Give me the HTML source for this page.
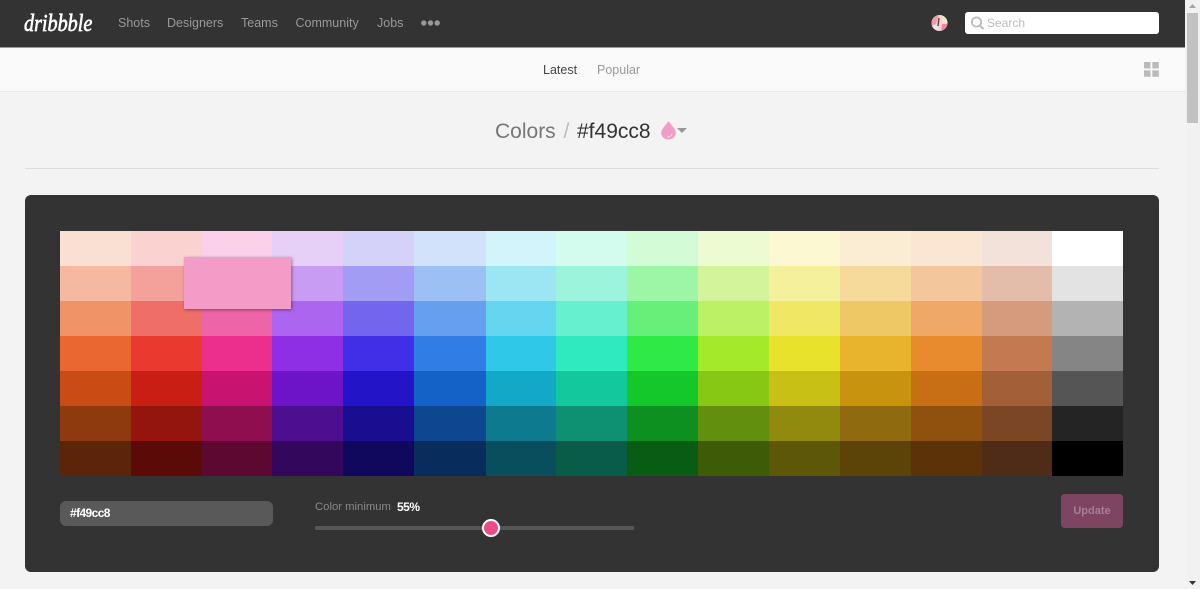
<!DOCTYPE html>
<html lang="en">
<head>
<meta charset="utf-8">
<title>Colors / #f49cc8</title>
<style>
html,body{margin:0;padding:0;width:1200px;height:589px;overflow:hidden;background:#f3f3f3;font-family:"Liberation Sans",Arial,sans-serif;}
.a{position:absolute;white-space:nowrap;}
#hdr{left:0;top:0;width:1185px;height:47px;background:#333;border-bottom:1px solid #999;}
#sub{left:0;top:48px;width:1185px;height:43px;background:#fafafa;border-bottom:1px solid #e8e8e8;}
.nav{top:15px;font-size:12.5px;line-height:16px;color:#999;}
#panel{left:25px;top:195px;width:1134px;height:377px;background:#333;border-radius:6px;}
#g{left:60px;top:231px;display:grid;grid-template-columns:71px 71px 70px 71px 71px 72px 70px 71px 71px 71px 71px 71px 71px 70px 71px;grid-auto-rows:35px;}
</style>
</head>
<body>
<div class="a" id="hdr"></div>
<div class="a" id="sub"></div>
<div class="a" style="left:24px;top:7px;font:italic 24px/34px 'Liberation Serif',serif;color:#fff;-webkit-text-stroke:.7px #fff;transform:scaleX(.84);transform-origin:0 0;">dribbble</div>
<div class="a nav" style="left:118px;">Shots</div>
<div class="a nav" style="left:167px;">Designers</div>
<div class="a nav" style="left:241px;">Teams</div>
<div class="a nav" style="left:295.500px;">Community</div>
<div class="a nav" style="left:377px;">Jobs</div>
<svg class="a" style="left:420px;top:18px;" width="22" height="10"><circle cx="3.800" cy="5" r="2.700" fill="#999"/><circle cx="10.500" cy="5" r="2.700" fill="#999"/><circle cx="17.200" cy="5" r="2.700" fill="#999"/></svg>

<svg class="a" style="left:931px;top:15px;" width="17" height="17" viewBox="0 0 17 17">
<defs><clipPath id="av"><circle cx="8.500" cy="8" r="8"/></clipPath></defs>
<g clip-path="url(#av)"><rect width="17" height="17" fill="#f2d3da"/><path d="M0 0h8L5 9 0 11z" fill="#e8a0a8"/><path d="M10 0h7v8h-5z" fill="#f3e6c8"/><path d="M0 11l6-1 1 7H0z" fill="#f6e3e8"/><path d="M11 9h6v8h-7z" fill="#e98aa3"/><path d="M8 3L7 11" stroke="#6b3a45" stroke-width="1.400"/></g></svg>
<div class="a" style="left:965px;top:12px;width:194px;height:22px;background:#fff;border-radius:3px;"></div>
<svg class="a" style="left:970px;top:15px;" width="15" height="16" viewBox="0 0 15 16"><circle cx="6.500" cy="7" r="4.600" fill="none" stroke="#bbb" stroke-width="1.800"/><path d="M10 10.500l3.400 3.600" stroke="#bbb" stroke-width="2.200"/></svg>
<div class="a" style="left:987px;top:15px;font-size:12px;line-height:16px;color:#bbb;">Search</div>

<div class="a" style="left:543px;top:62px;font-size:12.500px;line-height:16px;color:#444;">Latest</div>
<div class="a" style="left:597px;top:62px;font-size:12.500px;line-height:16px;color:#999;">Popular</div>
<svg class="a" style="left:1144px;top:62px;" width="15" height="15"><rect width="6.500" height="6.500" fill="#bbb"/><rect x="8.300" width="6.500" height="6.500" fill="#bbb"/><rect y="8.300" width="6.500" height="6.500" fill="#bbb"/><rect x="8.300" y="8.300" width="6.500" height="6.500" fill="#bbb"/></svg>

<div class="a" style="left:495px;top:119px;font-size:21px;line-height:26px;color:#777;">Colors</div>
<div class="a" style="left:563.500px;top:119px;font-size:21px;line-height:26px;color:#bbb;">/</div>
<div class="a" style="left:577px;top:119px;font-size:21px;line-height:26px;color:#333;">#f49cc8</div>
<svg class="a" style="left:660px;top:120px;" width="30" height="21" viewBox="0 0 30 21"><path d="M8.500 1C6.500 4.500 1.200 8.600 1.200 13c0 3.600 3.200 6.500 7.300 6.500s7.300-2.900 7.300-6.500C15.800 8.600 10.500 4.500 8.500 1z" fill="#f09cc8"/><path d="M7 17c2.500 0 4.500-1.200 5-3.500" fill="none" stroke="#fbdcec" stroke-width="1"/><path d="M17 8h10l-5 5z" fill="#999"/></svg>
<div class="a" style="left:25px;top:168px;width:1134px;height:1px;background:#dcdcdc;"></div>

<div class="a" id="panel"></div>
<div class="a" id="g">
<div style="background:#fadfd3"></div><div style="background:#fad2cf"></div><div style="background:#fad1e9"></div><div style="background:#e6d0f8"></div><div style="background:#d5d2fa"></div><div style="background:#d2e2fa"></div><div style="background:#d2f4fa"></div><div style="background:#d3fcef"></div><div style="background:#d2fbd6"></div><div style="background:#ecfbd2"></div><div style="background:#fcf9d2"></div><div style="background:#faedd3"></div><div style="background:#fbe5d3"></div><div style="background:#f3e2da"></div><div style="background:#ffffff"></div>
<div style="background:#f5b8a0"></div><div style="background:#f4a09b"></div><div style="background:#f49cc8"></div><div style="background:#c99cf3"></div><div style="background:#a39cf4"></div><div style="background:#9cbff4"></div><div style="background:#9ce6f4"></div><div style="background:#9cf4dc"></div><div style="background:#9cf6a6"></div><div style="background:#d4f49c"></div><div style="background:#f5f09c"></div><div style="background:#f5da9c"></div><div style="background:#f4c69c"></div><div style="background:#e3bda9"></div><div style="background:#e3e3e3"></div>
<div style="background:#f09468"></div><div style="background:#f06e68"></div><div style="background:#ee64a8"></div><div style="background:#ac65ee"></div><div style="background:#7265ee"></div><div style="background:#659fee"></div><div style="background:#65d6f0"></div><div style="background:#66f0cf"></div><div style="background:#66f079"></div><div style="background:#bcf065"></div><div style="background:#f0e865"></div><div style="background:#eec865"></div><div style="background:#f0a868"></div><div style="background:#d49c7c"></div><div style="background:#b3b3b3"></div>
<div style="background:#ea6830"></div><div style="background:#ea3a30"></div><div style="background:#ec2f8c"></div><div style="background:#8e2fe6"></div><div style="background:#402fe6"></div><div style="background:#307de6"></div><div style="background:#2fc8e8"></div><div style="background:#2feabe"></div><div style="background:#2fea46"></div><div style="background:#a4ea2a"></div><div style="background:#e8e22c"></div><div style="background:#e8b42c"></div><div style="background:#e88a2e"></div><div style="background:#c47a50"></div><div style="background:#858585"></div>
<div style="background:#c84c14"></div><div style="background:#c81e14"></div><div style="background:#c81470"></div><div style="background:#6e14c8"></div><div style="background:#2414c8"></div><div style="background:#1462c8"></div><div style="background:#14a8c8"></div><div style="background:#14c89e"></div><div style="background:#14c82c"></div><div style="background:#86c814"></div><div style="background:#c8c014"></div><div style="background:#c8940f"></div><div style="background:#c86e14"></div><div style="background:#a35f36"></div><div style="background:#555555"></div>
<div style="background:#8f3a0e"></div><div style="background:#94140e"></div><div style="background:#8f0e50"></div><div style="background:#4e0e90"></div><div style="background:#1a0e90"></div><div style="background:#0e4690"></div><div style="background:#0e7a90"></div><div style="background:#0e9072"></div><div style="background:#0e9020"></div><div style="background:#628f0e"></div><div style="background:#908a0e"></div><div style="background:#906a0e"></div><div style="background:#90500e"></div><div style="background:#7a4626"></div><div style="background:#242424"></div>
<div style="background:#5c2408"></div><div style="background:#5c0a08"></div><div style="background:#5c0830"></div><div style="background:#33085c"></div><div style="background:#10085c"></div><div style="background:#082c5c"></div><div style="background:#084e5c"></div><div style="background:#085c48"></div><div style="background:#085c14"></div><div style="background:#3e5c08"></div><div style="background:#5c5808"></div><div style="background:#5c4408"></div><div style="background:#5c3208"></div><div style="background:#4e2c18"></div><div style="background:#000000"></div>
</div>
<div class="a" style="left:184px;top:257px;width:107px;height:52px;background:#f49cc8;box-shadow:1px 1px 3px rgba(0,0,0,.4);"></div>

<div class="a" style="left:60px;top:501px;width:213px;height:25px;background:#595959;border-radius:6px;"></div>
<div class="a" style="left:70px;top:505px;font-size:12px;line-height:16px;font-weight:bold;color:#fff;letter-spacing:-.6px;">#f49cc8</div>
<div class="a" style="left:315px;top:499px;font-size:11.300px;line-height:16px;color:#888;">Color minimum</div>
<div class="a" style="left:397px;top:499px;font-size:12px;line-height:16px;font-weight:bold;color:#fff;letter-spacing:-.5px;">55%</div>
<div class="a" style="left:315px;top:526px;width:319px;height:4px;background:#555;"></div>
<div class="a" style="left:482px;top:519px;width:14px;height:14px;background:#ea4c89;border:2px solid #fff;border-radius:50%;"></div>
<div class="a" style="left:1061px;top:494px;width:62px;height:34px;background:#7e4560;border-radius:4px;text-align:center;font-size:11px;line-height:35px;font-weight:bold;color:#a57f92;">Update</div>

<div class="a" style="left:1185px;top:0;width:15px;height:589px;background:#f1f1f1;"></div>
<div class="a" style="left:1187px;top:13px;width:11px;height:110px;background:#c1c1c1;"></div>
<svg class="a" style="left:1185px;top:0;" width="15" height="589"><path d="M7.500 4L11 8H4z" fill="#a3a3a3"/><path d="M7.500 585L11 581H4z" fill="#333"/></svg>
</body>
</html>
